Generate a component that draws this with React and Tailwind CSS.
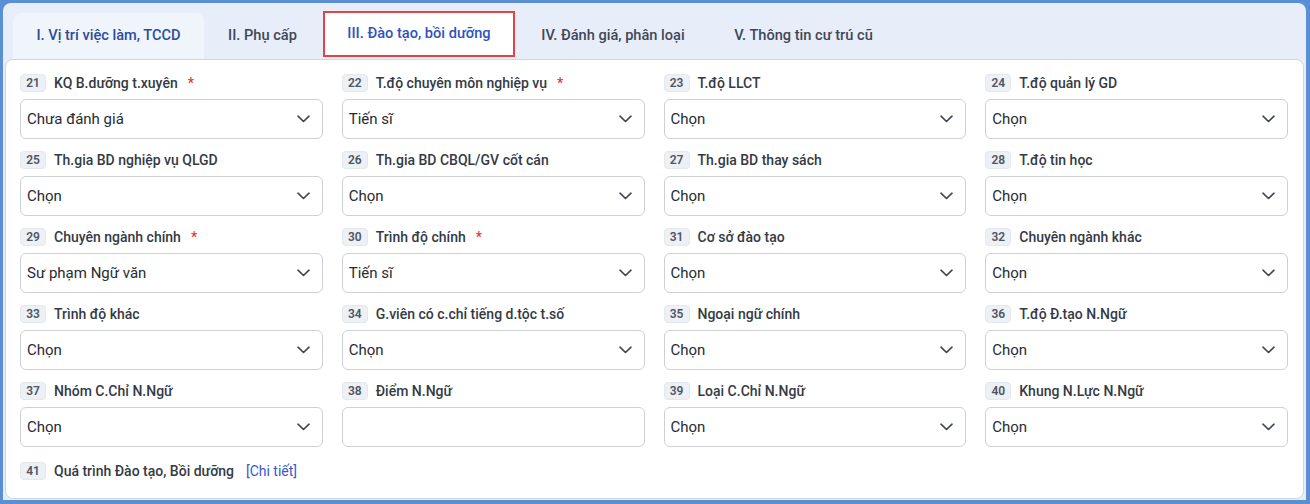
import React from "react";

const fields = [
  { n: 21, label: "KQ B.dưỡng t.xuyên", req: true, value: "Chưa đánh giá" },
  { n: 22, label: "T.độ chuyên môn nghiệp vụ", req: true, value: "Tiến sĩ" },
  { n: 23, label: "T.độ LLCT", value: "Chọn" },
  { n: 24, label: "T.độ quản lý GD", value: "Chọn" },
  { n: 25, label: "Th.gia BD nghiệp vụ QLGD", value: "Chọn" },
  { n: 26, label: "Th.gia BD CBQL/GV cốt cán", value: "Chọn" },
  { n: 27, label: "Th.gia BD thay sách", value: "Chọn" },
  { n: 28, label: "T.độ tin học", value: "Chọn" },
  { n: 29, label: "Chuyên ngành chính", req: true, value: "Sư phạm Ngữ văn" },
  { n: 30, label: "Trình độ chính", req: true, value: "Tiến sĩ" },
  { n: 31, label: "Cơ sở đào tạo", value: "Chọn" },
  { n: 32, label: "Chuyên ngành khác", value: "Chọn" },
  { n: 33, label: "Trình độ khác", value: "Chọn" },
  { n: 34, label: "G.viên có c.chỉ tiếng d.tộc t.số", value: "Chọn" },
  { n: 35, label: "Ngoại ngữ chính", value: "Chọn" },
  { n: 36, label: "T.độ Đ.tạo N.Ngữ", value: "Chọn" },
  { n: 37, label: "Nhóm C.Chỉ N.Ngữ", value: "Chọn" },
  { n: 38, label: "Điểm N.Ngữ", input: true },
  { n: 39, label: "Loại C.Chỉ N.Ngữ", value: "Chọn" },
  { n: 40, label: "Khung N.Lực N.Ngữ", value: "Chọn" },
];

function Badge({ n }) {
  return (
    <span className="inline-flex items-center justify-center w-[26px] h-[18px] rounded-[4px] bg-[#edf0f5] border border-[#e3e7ee] text-[12px] font-semibold text-[#4f5663] leading-none shrink-0">
      {n}
    </span>
  );
}

function Chevron() {
  return (
    <svg width="13" height="8" viewBox="0 0 13 8" fill="none" className="shrink-0">
      <path d="M1 1.2 L6.5 6.5 L12 1.2" stroke="#3f4552" strokeWidth="1.6" strokeLinecap="round" strokeLinejoin="round" />
    </svg>
  );
}

function Field({ f }) {
  return (
    <div className="flex flex-col">
      <div className="flex items-center h-[18px] gap-[8px]">
        <Badge n={f.n} />
        <span className="text-[14px] font-medium text-[#343a45] whitespace-nowrap">{f.label}</span>
        {f.req && <span className="text-[14px] font-medium text-[#e53935] ml-[2px]">*</span>}
      </div>
      <div className="mt-[7px] h-[40px] rounded-[6px] border border-[#cdd0d5] bg-white flex items-center justify-between pl-[6px] pr-[12px]">
        <span className="text-[15px] text-[#272b33]">{f.input ? "" : f.value}</span>
        {!f.input && <Chevron />}
      </div>
    </div>
  );
}

export default function App() {
  return (
    <div
      className="w-[1310px] h-[504px] bg-[#5a8fd6] pt-[3px] pl-[3px] pr-[4px] pb-[4px]"
      style={{ fontFamily: "Roboto, 'Noto Sans', sans-serif" }}
    >
      <div className="h-full bg-[#e8eef9] rounded-tl-[8px] rounded-tr-[8px] flex flex-col px-[2px] pb-[1px]">
        <div className="flex items-end h-[56px] pl-[8px]">
          <div className="h-[46px] w-[191px] flex items-center justify-center rounded-t-[8px] bg-[#f0f4fb] text-[14.6px] font-medium text-[#2d4c9c] whitespace-nowrap">
            I. Vị trí việc làm, TCCD
          </div>
          <div className="h-[46px] w-[117px] flex items-center justify-center text-[14.6px] font-medium text-[#3f4757] whitespace-nowrap">
            II. Phụ cấp
          </div>
          <div className="h-[46px] w-[192px] ml-[2px] mb-[2px] flex items-center justify-center bg-white border-2 border-[#e04444] text-[14.6px] font-medium text-[#2e52c0] whitespace-nowrap">
            III. Đào tạo, bồi dưỡng
          </div>
          <div className="h-[46px] w-[196px] flex items-center justify-center text-[14.6px] font-medium text-[#3f4757] whitespace-nowrap">
            IV. Đánh giá, phân loại
          </div>
          <div className="h-[46px] w-[185px] flex items-center justify-center text-[14.6px] font-medium text-[#3f4757] whitespace-nowrap">
            V. Thông tin cư trú cũ
          </div>
        </div>
        <div className="flex-1 bg-white border border-[#cdd7e4] rounded-[8px] pt-[14px] pl-[14px] pr-[15px]">
          <div className="grid grid-cols-4 gap-x-[19px] gap-y-[12px]">
            {fields.map((f) => (
              <Field key={f.n} f={f} />
            ))}
          </div>
          <div className="flex items-center h-[18px] gap-[8px] mt-[15px]">
            <Badge n={41} />
            <span className="text-[14px] font-medium text-[#343a45]">Quá trình Đào tạo, Bồi dưỡng</span>
            <span className="text-[14px] text-[#3a57d0] ml-[4px]">[Chi tiết]</span>
          </div>
        </div>
      </div>
    </div>
  );
}
